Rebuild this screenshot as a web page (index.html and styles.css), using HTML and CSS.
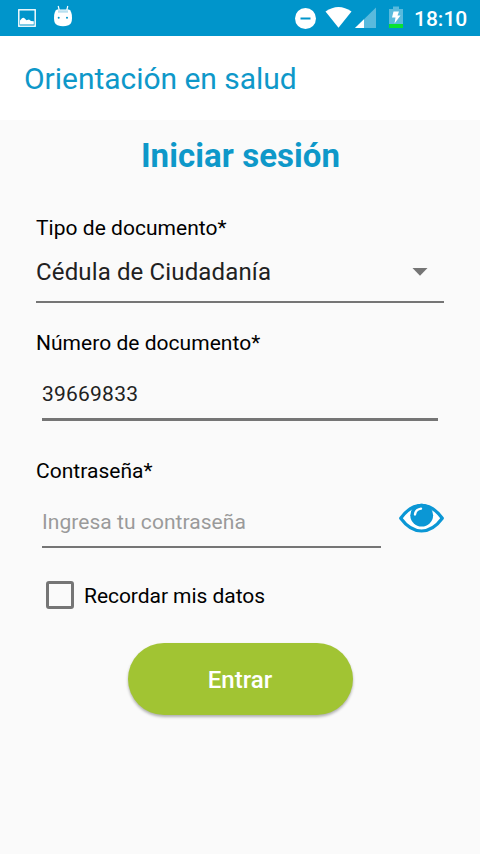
FILE: index.html
```html
<!DOCTYPE html>
<html lang="es">
<head>
<meta charset="utf-8">
<title>Orientación en salud</title>
<link rel="stylesheet" href="styles.css">
</head>
<body>
<div class="status">
  <svg class="status-image" width="18" height="18" viewBox="0 0 18 18"><rect x=".8" y=".8" width="16.4" height="16.4" fill="none" stroke="#fff" stroke-width="1.4"/><path d="M2 15.500V11.500L4 9.300Q5.500 8 7 9.800L8.500 11.300L11 10.600L13 12L15.800 12.300V15.500Z" fill="#fff"/></svg>
  <svg class="status-bot" width="18" height="22" viewBox="0 0 18 22"><path d="M4.200 1L5.200 5M13.800 1L12.800 5" stroke="#fff" stroke-width="1.200"/><path d="M3 4.500H15Q18 6 18 13Q18 19 14.500 20.300Q9 22 3.500 20.300Q0 19 0 13Q0 6 3 4.500Z" fill="#fff"/><path d="M4 6.500H14" stroke="#b9e0f0" stroke-width="2.400"/><circle cx="4.700" cy="12.800" r="1" fill="#0095cb"/><circle cx="13" cy="12.800" r="1" fill="#0095cb"/></svg>
  <span class="spacer"></span>
  <svg width="173" height="36" viewBox="295 0 173 36" class="status-icons">
    <circle cx="305.500" cy="18.500" r="10.500" fill="#fff"/><path d="M300.500 18.500H310.500" stroke="#0095cb" stroke-width="2"/>
    <path d="M325.500 11.500Q338.500 2.500 351.500 11.500L338.500 27.700Z" fill="#fff"/>
    <path d="M376 7.500V28H355Z" fill="#fff" fill-opacity=".35"/><path d="M364 19.200V28H355Z" fill="#fff"/>
    <path d="M389 24V9H393V6.500H399V9H403V24Z" fill="#fff" fill-opacity=".35"/><path d="M389 24H403V28H389Z" fill="#08e332"/><path d="M393.500 11.500H399L397.500 15.500H400.500L394.500 23.500L395.500 17.500H392Z" fill="#fff"/>
    <text x="414" y="26" class="clock">18:10</text>
  </svg>
</div>
<header class="appbar">Orientación en salud</header>
<main>
  <h1>Iniciar sesión</h1>
  <form>
    <label class="label">Tipo de documento*</label>
    <div class="select"><span>Cédula de Ciudadanía</span><svg width="16" height="8" viewBox="0 0 16 8"><path d="M.5 0H15.500L8 7.700Z" fill="#757575"/></svg></div>
    <label class="label label-number">Número de documento*</label>
    <div class="field field-number">39669833</div>
    <label class="label label-password">Contraseña*</label>
    <div class="password">
      <div class="field field-password">Ingresa tu contraseña</div>
      <svg class="eye" width="46" height="30" viewBox="0 0 46 30"><path d="M2.700 15.300Q12 2.300 23.500 2.300Q35 2.300 44.300 15.300Q35 28 23.500 28Q12 28 2.700 15.300Z" fill="#fff" stroke="#0b97d5" stroke-width="3.200" stroke-linejoin="round"/><circle cx="23.700" cy="12.200" r="11.400" fill="#0b97d5"/><path d="M17 11.500Q17.500 6.500 23 5.600" fill="none" stroke="#fff" stroke-width="2.400" stroke-linecap="round"/></svg>
    </div>
    <div class="remember"><span class="box"></span><span class="remember-text">Recordar mis datos</span></div>
    <button type="button">Entrar</button>
  </form>
</main>
</body>
</html>
```
FILE: styles.css
```css
* { box-sizing: border-box; }
body { margin: 0; width: 480px; height: 854px; overflow: hidden; background: #fafafa; color: #000; font-family: Roboto, sans-serif; font-size: 21px; }
svg { display: block; flex: none; }
.status { height: 36px; background: #0095cb; display: flex; align-items: flex-start; padding: 0 12px 0 18px; }
.status-image { margin-top: 9px; }
.status-bot { margin: 5px 0 0 18px; }
.spacer { flex: 1; }
.clock { font-size: 21px; font-weight: 500; fill: #fff; }
.appbar { height: 84px; padding-left: 24px; background: #fff; color: #0e98c9; font-size: 30px; line-height: 85px; letter-spacing: -.03px; }
main { padding: 0 36px; }
h1 { margin: 0; padding: 16px 0 0 1px; height: 96px; font-size: 33px; line-height: 40px; font-weight: 700; letter-spacing: .06px; text-align: center; color: #0e98c9; }
.label { display: block; height: 24px; line-height: 24px; letter-spacing: .03px; }
.select { height: 63px; display: flex; align-items: center; justify-content: space-between; padding: 2px 16px 0 0; border-bottom: 2px solid #757575; color: #212121; font-size: 24px; letter-spacing: .14px; }
.label-number { margin-top: 28px; }
.field { margin: 0 6px; color: #212121; border-bottom: 3px solid #757575; letter-spacing: .05px; }
.field-number { height: 66px; line-height: 78px; letter-spacing: .22px; }
.label-password { margin-top: 38px; }
.password { display: flex; align-items: flex-start; }
.field-password { flex: 1; height: 65px; line-height: 78px; border-bottom-width: 2px; color: #9a9a9a; margin-right: 17px; }
.eye { margin-top: 20px; }
.remember { margin: 33px 0 0 10px; height: 28px; display: flex; align-items: center; gap: 10px; }
.box { width: 28px; height: 28px; border: 3px solid #757575; border-radius: 3px; }
.remember-text { padding-top: 2px; letter-spacing: -.05px; }
button { display: block; width: 225px; height: 72px; margin: 34px auto 0; padding: 0; border: 0; border-radius: 36px; background: #a1c433; color: #fff; font: 500 24px/74px Roboto, sans-serif; box-shadow: 0 2px 3px rgba(0,0,0,.3); }
```
